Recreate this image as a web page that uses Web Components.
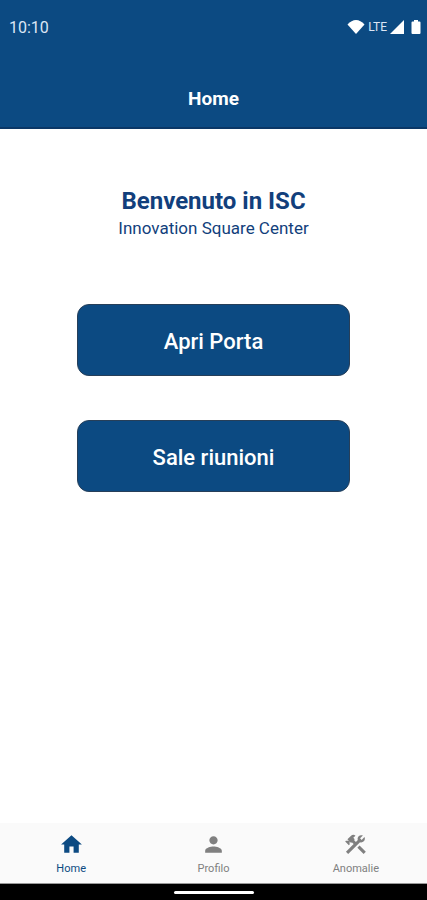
<!DOCTYPE html>
<html lang="it">
<head>
<meta charset="utf-8">
<meta name="viewport" content="width=device-width, initial-scale=1">
<title>Home</title>
<style>
  html, body { height: 100%; margin: 0; }
  body {
    --brand: #0c4a82;
    --ink: #123f7c;
    --muted: #808080;
    font-family: Roboto, "Liberation Sans", sans-serif;
    background: #fff;
  }
  isc-app { height: 100%; }
</style>
</head>
<body>
<isc-app></isc-app>
<script>
  const define = (name, html) => customElements.define(name, class extends HTMLElement {
    constructor() {
      super();
      this.attachShadow({ mode: "open" }).innerHTML = html;
    }
  });

  define("status-bar", `
    <style>
      :host { display: flex; justify-content: space-between; align-items: center; height: 54px; padding: 0 6px 0 9px; color: #dce6f5; font-size: 16px; }
      .icons { display: flex; align-items: center; gap: 3px; font-size: 12px; }
      svg { display: block; fill: #fff; }
      .battery { margin-left: 4px; }
    </style>
    <time>10:10</time>
    <div class="icons">
      <svg width="18" height="14" viewBox="0 0 18 14" aria-hidden="true"><path d="M9 14 .5 4.500Q4.500 0 9 0t8.500 4.500z"/></svg>
      <span>LTE</span>
      <svg width="14" height="14" viewBox="0 0 14 14" aria-hidden="true"><path d="M14 0v14H0z"/></svg>
      <svg class="battery" width="10" height="14" viewBox="0 0 10 14" aria-hidden="true"><path d="M3 0h4v1.500h1.500q1 0 1 1V13q0 1-1 1h-7q-1 0-1-1V2.500q0-1 1-1H3z"/></svg>
    </div>`);

  define("title-bar", `
    <style>
      :host { display: block; padding: 33px 16px 16px; text-align: center; color: #fff; }
      h1 { margin: 0; font-size: 19px; line-height: 24px; font-weight: 700; }
    </style>
    <h1><slot></slot></h1>`);

  define("welcome-text", `
    <style>
      :host { display: block; text-align: center; color: var(--ink); }
      h2 { margin: 0; font-size: 24px; line-height: 30px; font-weight: 700; }
      p { margin: 0; font-size: 17px; line-height: 24px; }
    </style>
    <h2><slot name="title"></slot></h2>
    <p><slot></slot></p>`);

  define("action-button", `
    <style>
      :host { display: block; }
      button { display: block; box-sizing: border-box; width: 100%; padding: 21px 16px 17px; border: 1px solid #273f59; border-radius: 12px; background: var(--brand); color: #fff; font: 500 22px/32px Roboto, "Liberation Sans", sans-serif; }
    </style>
    <button type="button"><slot></slot></button>`);

  define("nav-item", `
    <style>
      :host { display: block; flex: 1 1 0; color: var(--muted); }
      :host([active]) { color: var(--brand); }
      a { display: flex; flex-direction: column; align-items: center; gap: 4px; padding: 9px 0 6px; color: inherit; text-decoration: none; font-size: 11px; line-height: 16px; }
      ::slotted(svg) { display: block; width: 25px; height: 25px; fill: currentColor; }
    </style>
    <a href="#"><slot name="icon"></slot><span><slot></slot></span></a>`);

  define("bottom-nav", `
    <style>
      :host { display: block; background: #fafafa; border-bottom: 1px solid #999; }
      nav { display: flex; }
    </style>
    <nav><slot></slot></nav>`);

  define("gesture-bar", `
    <style>
      :host { display: flex; justify-content: center; padding: 7px 0 6px; background: #000; }
      i { width: 80px; height: 3px; border-radius: 2px; background: #fff; }
    </style>
    <i></i>`);

  define("isc-app", `
    <style>
      :host { display: flex; flex-direction: column; min-height: 100%; }
      header { background: var(--brand); border-bottom: 2px solid #0b3766; }
      main { flex: 1; padding: 57px 18% 24px; }
      .actions { display: grid; gap: 44px; margin-top: 64px; }
    </style>
    <header>
      <status-bar></status-bar>
      <title-bar>Home</title-bar>
    </header>
    <main>
      <welcome-text><span slot="title">Benvenuto in ISC</span>Innovation Square Center</welcome-text>
      <div class="actions">
        <action-button>Apri Porta</action-button>
        <action-button>Sale riunioni</action-button>
      </div>
    </main>
    <bottom-nav>
      <nav-item active>
        <svg slot="icon" viewBox="0 0 24 24" aria-hidden="true"><path d="M10 20v-6h4v6h5v-8h3L12 3 2 12h3v8z"/></svg>Home</nav-item>
      <nav-item>
        <svg slot="icon" viewBox="0 0 24 24" aria-hidden="true"><path d="M12 12c2.210 0 4-1.790 4-4s-1.790-4-4-4-4 1.790-4 4 1.790 4 4 4zm0 2c-2.670 0-8 1.340-8 4v2h16v-2c0-2.660-5.330-4-8-4z"/></svg>Profilo</nav-item>
      <nav-item>
        <svg slot="icon" viewBox="0 0 24 24" aria-hidden="true"><path d="M13.780 15.170l2.120-2.120 6 6-2.120 2.120z"/><path d="M17.500 10c1.930 0 3.500-1.570 3.500-3.500 0-.58-.16-1.120-.41-1.600l-2.700 2.700-1.490-1.490 2.700-2.700c-.48-.25-1.020-.41-1.600-.41C15.570 3 14 4.570 14 6.500c0 .41.08.8.21 1.160l-1.850 1.850-1.780-1.780.71-.71-1.410-1.410L12 3.490c-1.170-1.170-3.070-1.170-4.240 0L4.220 7.030l1.410 1.410H2.810l-.71.71 3.540 3.540.71-.71V9.150l1.410 1.410.71-.71 1.780 1.780-7.410 7.410 2.120 2.120L16.340 9.790c.36.13.75.21 1.160.21z"/></svg>Anomalie</nav-item>
    </bottom-nav>
    <gesture-bar></gesture-bar>`);
</script>
</body>
</html>
